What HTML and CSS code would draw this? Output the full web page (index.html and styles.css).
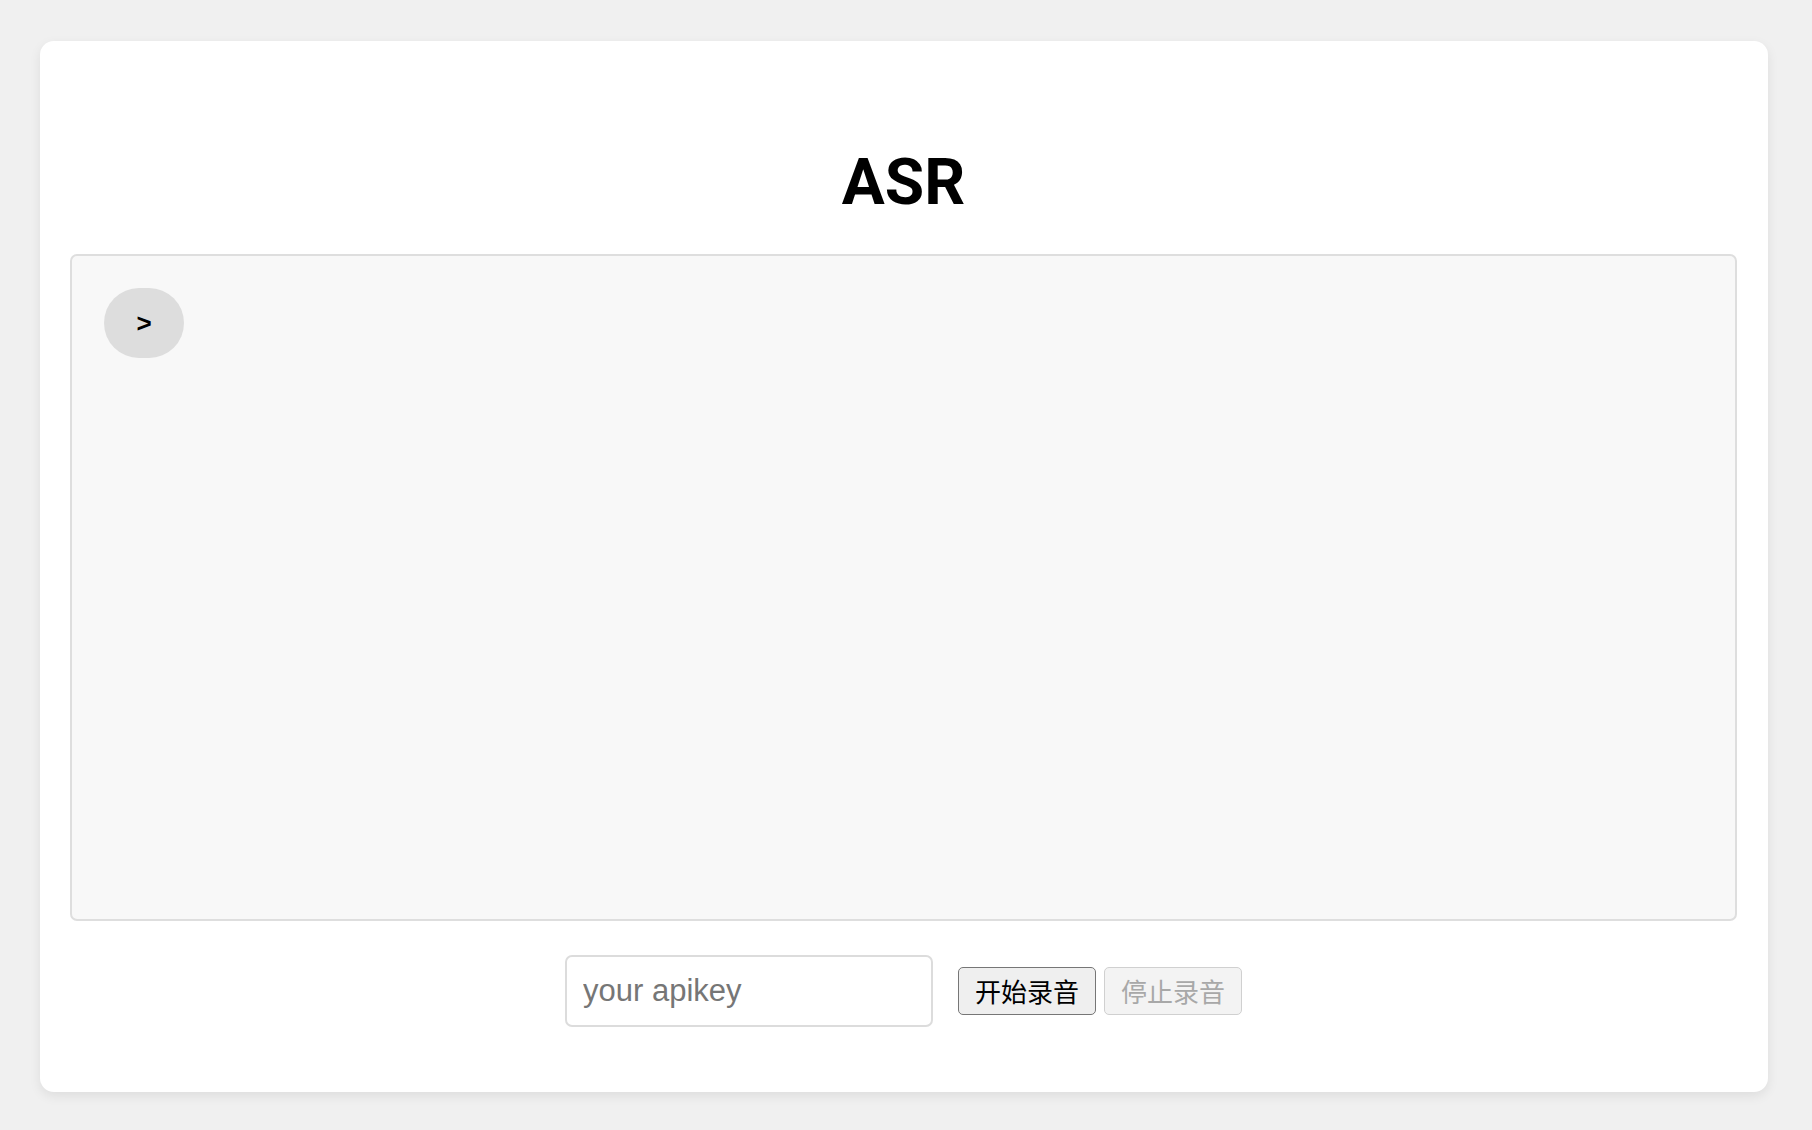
FILE: index.html
```html
<!DOCTYPE html>
<html lang="zh">
<head>
<meta charset="utf-8">
<title>ASR</title>
<link rel="stylesheet" href="styles.css">
</head>
<body>
<div class="card">
  <h1 class="title">ASR</h1>
  <div class="log">
    <div class="bubble">&gt;</div>
  </div>
  <div class="controls">
    <input class="apikey" type="text" placeholder="your apikey">
    <button class="btn start">开始录音</button>
    <button class="btn stop" disabled>停止录音</button>
  </div>
</div>
</body>
</html>
```
FILE: styles.css
```css
html, body {
  margin: 0;
  padding: 0;
}
body {
  background: #f0f0f0;
  font-family: "Liberation Sans", Arial, "Noto Sans CJK SC", sans-serif;
  padding: 41px 44px 39px 40px;
}
.card {
  background: #fff;
  border-radius: 14px;
  padding: 30px 31px 65px 30px;
  box-shadow: 0 4px 12px rgba(0, 0, 0, 0.08);
}
.title {
  margin: 74px 0 34px;
  font-family: Roboto, "Liberation Sans", sans-serif;
  font-weight: 700;
  font-size: 64px;
  line-height: 75px;
  text-align: center;
  color: #000;
}
.log {
  box-sizing: border-box;
  height: 667px;
  background: #f8f8f8;
  border: 2px solid #dedede;
  border-radius: 7px;
  padding: 32px;
}
.bubble {
  width: 80px;
  height: 70px;
  border-radius: 35px;
  background: #dddddd;
  display: flex;
  align-items: center;
  justify-content: center;
  font-family: "Liberation Sans", Arial, sans-serif;
  font-weight: 700;
  font-size: 26px;
  color: #000;
}
.controls {
  display: flex;
  align-items: center;
  justify-content: center;
  margin-top: 34px;
}
.apikey {
  box-sizing: border-box;
  width: 368px;
  height: 72px;
  border: 2px solid #dcdcdc;
  border-radius: 7px;
  padding: 0 16px;
  font-family: "Liberation Sans", Arial, sans-serif;
  font-size: 31px;
  color: #000;
  background: #fff;
  margin-right: 25px;
  outline: none;
}
.apikey::placeholder {
  color: #767676;
}
.btn {
  box-sizing: border-box;
  height: 48px;
  padding: 0 16px;
  font-family: "Noto Sans CJK SC", sans-serif;
  font-size: 26px;
  line-height: 1;
  border-radius: 5px;
}
.start {
  background: #efefef;
  border: 1.5px solid #767676;
  color: #000;
}
.stop {
  margin-left: 8px;
  background: #f3f3f3;
  border: 1.5px solid #d0d0d0;
  color: #a8a8a8;
}
```
